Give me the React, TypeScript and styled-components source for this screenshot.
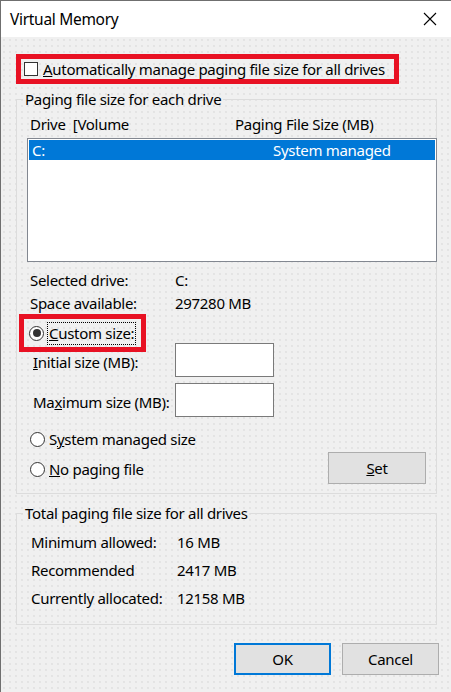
import React from 'react'
import styled, { createGlobalStyle } from 'styled-components'

const colors = {
  face: '#f0f0f0',
  text: '#000000',
  red: '#e81123',
  blue: '#0078d7',
  groupLine: '#dcdcdc',
  buttonFace: '#e1e1e1',
  buttonBorder: '#adadad'
}

const GlobalStyle = createGlobalStyle`
  html, body {
    margin: 0;
    padding: 0;
    background: ${colors.face};
  }
  body {
    font-family: "Noto Sans", "Open Sans", sans-serif;
    font-size: 15px;
    letter-spacing: -0.3px;
    color: ${colors.text};
  }
`

const Window = styled.div`
  width: 451px;
  height: 692px;
  box-sizing: border-box;
  border-top: 1px solid #6f6f6f;
  border-left: 1px solid #6f6f6f;
  background-color: ${colors.face};
  background-image: radial-gradient(#e4e4e4 0.7px, transparent 0.9px);
  background-size: 6px 6px;
  display: flex;
  flex-direction: column;
  overflow: hidden;
`
const TitleBar = styled.div`
  height: 36px;
  background: #ffffff;
  display: flex;
  align-items: center;
  justify-content: space-between;
  padding: 0 13px 0 9px;
  font-size: 15.5px;
`
const CloseButton = styled.div`
  width: 16px;
  height: 16px;
  display: flex;
  align-items: center;
  justify-content: center;
`
const Body = styled.div`
  padding: 17px 14px 0 15px;
  display: flex;
  flex-direction: column;
`
const Highlight = styled.div<{ $width: number }>`
  box-sizing: border-box;
  width: ${p => p.$width}px;
  border: 5px solid ${colors.red};
  display: flex;
  align-items: center;
  gap: 5px;
`
const AutoHighlight = styled(Highlight)`
  height: 30px;
  padding-left: 3px;
`
const CustomHighlight = styled(Highlight)`
  height: 38px;
  margin-left: -8px;
  padding-left: 5px;
  gap: 4px;
`
const Checkbox = styled.span`
  width: 14px;
  height: 14px;
  box-sizing: border-box;
  border: 1px solid #333333;
  background: #ffffff;
  flex-shrink: 0;
`
const Radio = styled.span<{ $checked?: boolean }>`
  width: 15px;
  height: 15px;
  box-sizing: border-box;
  border: 1px solid #333333;
  border-radius: 50%;
  background: #ffffff;
  flex-shrink: 0;
  display: flex;
  align-items: center;
  justify-content: center;
  &::after {
    content: '';
    width: 8px;
    height: 8px;
    border-radius: 50%;
    background: ${p => (p.$checked ? '#333333' : 'transparent')};
  }
`
const Focus = styled.span`
  outline: 1px dotted #000000;
  outline-offset: 0;
  padding: 0 1px;
  line-height: 21px;
`
const Group = styled.fieldset`
  margin: 0;
  border: 1px solid ${colors.groupLine};
  min-width: 0;
`
const Legend = styled.legend<{ $offset: number }>`
  padding: 0 2px;
  margin-left: ${p => p.$offset}px;
  line-height: 20px;
`
const DriveGroup = styled(Group)`
  margin-top: 5px;
  padding: 5px 0 9px 10px;
`
const TotalGroup = styled(Group)`
  margin-top: 9px;
  padding: 5px 0 12px 14px;
`
const ListHeader = styled.div`
  display: flex;
  line-height: 20px;
  padding-left: 3px;
`
const Column = styled.span<{ $width: number }>`
  width: ${p => p.$width}px;
  white-space: pre;
`
const ListBox = styled.div`
  margin-top: 4px;
  height: 124px;
  box-sizing: border-box;
  border: 1px solid #828790;
  background: #ffffff;
  padding: 1px;
  margin-right: -1px;
`
const ListRow = styled.div<{ $selected?: boolean }>`
  display: flex;
  height: 20px;
  line-height: 20px;
  padding-left: 3px;
  background: ${p => (p.$selected ? colors.blue : 'transparent')};
  color: ${p => (p.$selected ? '#ffffff' : colors.text)};
`
const InfoGrid = styled.div<{ $label: number; $row: number }>`
  display: grid;
  grid-template-columns: ${p => p.$label}px auto;
  grid-auto-rows: ${p => p.$row}px;
  align-items: center;
`
const DriveInfo = styled(InfoGrid)`
  margin-top: 6px;
  padding-left: 3px;
`
const SizeGrid = styled.div`
  margin-top: -9px;
  padding-left: 6px;
  display: grid;
  grid-template-columns: 142px 99px;
  grid-auto-rows: 34px;
  row-gap: 6px;
  align-items: center;
`
const SizeLabel = styled.span`
  padding-top: 3px;
`
const TextBox = styled.div`
  height: 34px;
  box-sizing: border-box;
  border: 1px solid #7a7a7a;
  background: #ffffff;
`
const ChoiceArea = styled.div`
  margin-top: 7px;
  display: flex;
  justify-content: space-between;
  align-items: flex-end;
  padding-right: 10px;
`
const Choices = styled.div`
  display: flex;
  flex-direction: column;
  padding-left: 3px;
`
const Choice = styled.div`
  height: 30px;
  display: flex;
  align-items: center;
  gap: 4px;
`
const Button = styled.div<{ $default?: boolean; $width: number }>`
  width: ${p => p.$width}px;
  height: 32px;
  box-sizing: border-box;
  background: ${colors.buttonFace};
  border: ${p => (p.$default ? `2px solid ${colors.blue}` : `1px solid ${colors.buttonBorder}`)};
  display: flex;
  align-items: center;
  justify-content: center;
`
const Footer = styled.div`
  margin-top: 18px;
  margin-right: -2px;
  display: flex;
  justify-content: flex-end;
  gap: 11px;
`

const CloseIcon = () => (
  <svg width="14" height="14" viewBox="0 0 14 14">
    <path d="M1 1 L13 13 M13 1 L1 13" stroke="#000" strokeWidth="1.1" fill="none" />
  </svg>
)

const App: React.FC = () => {
  const totals = [
    ['Minimum allowed:', '16 MB'],
    ['Recommended', '2417 MB'],
    ['Currently allocated:', '12158 MB']
  ]

  return (
    <>
      <GlobalStyle />
      <Window>
        <TitleBar>
          <span>Virtual Memory</span>
          <CloseButton>
            <CloseIcon />
          </CloseButton>
        </TitleBar>
        <Body>
          <AutoHighlight $width={383}>
            <Checkbox />
            <span>
              <u>A</u>utomatically manage paging file size for all drives
            </span>
          </AutoHighlight>

          <DriveGroup>
            <Legend $offset={-4}>Paging file size for each drive</Legend>
            <ListHeader>
              <Column $width={205}>{'Drive  [Volume'}</Column>
              <Column $width={180}>Paging File Size (MB)</Column>
            </ListHeader>
            <ListBox>
              <ListRow $selected>
                <Column $width={241}>C:</Column>
                <Column $width={150}>System managed</Column>
              </ListRow>
            </ListBox>
            <DriveInfo $label={145} $row={23}>
              <span>Selected drive:</span>
              <span>C:</span>
              <span>Space available:</span>
              <span>297280 MB</span>
            </DriveInfo>
            <CustomHighlight $width={127}>
              <Radio $checked />
              <Focus>
                <u>C</u>ustom size:
              </Focus>
            </CustomHighlight>
            <SizeGrid>
              <SizeLabel>
                <u>I</u>nitial size (MB):
              </SizeLabel>
              <TextBox />
              <SizeLabel>
                Ma<u>x</u>imum size (MB):
              </SizeLabel>
              <TextBox />
            </SizeGrid>
            <ChoiceArea>
              <Choices>
                <Choice>
                  <Radio />
                  <span>
                    S<u>y</u>stem managed size
                  </span>
                </Choice>
                <Choice>
                  <Radio />
                  <span>
                    <u>N</u>o paging file
                  </span>
                </Choice>
              </Choices>
              <Button $width={98}>
                <span>
                  <u>S</u>et
                </span>
              </Button>
            </ChoiceArea>
          </DriveGroup>

          <TotalGroup>
            <Legend $offset={-8}>Total paging file size for all drives</Legend>
            <InfoGrid $label={146} $row={28}>
              {totals.map(([label, value]) => (
                <React.Fragment key={label}>
                  <span>{label}</span>
                  <span>{value}</span>
                </React.Fragment>
              ))}
            </InfoGrid>
          </TotalGroup>

          <Footer>
            <Button $default $width={97}>OK</Button>
            <Button $width={97}>Cancel</Button>
          </Footer>
        </Body>
      </Window>
    </>
  )
}

export default App
